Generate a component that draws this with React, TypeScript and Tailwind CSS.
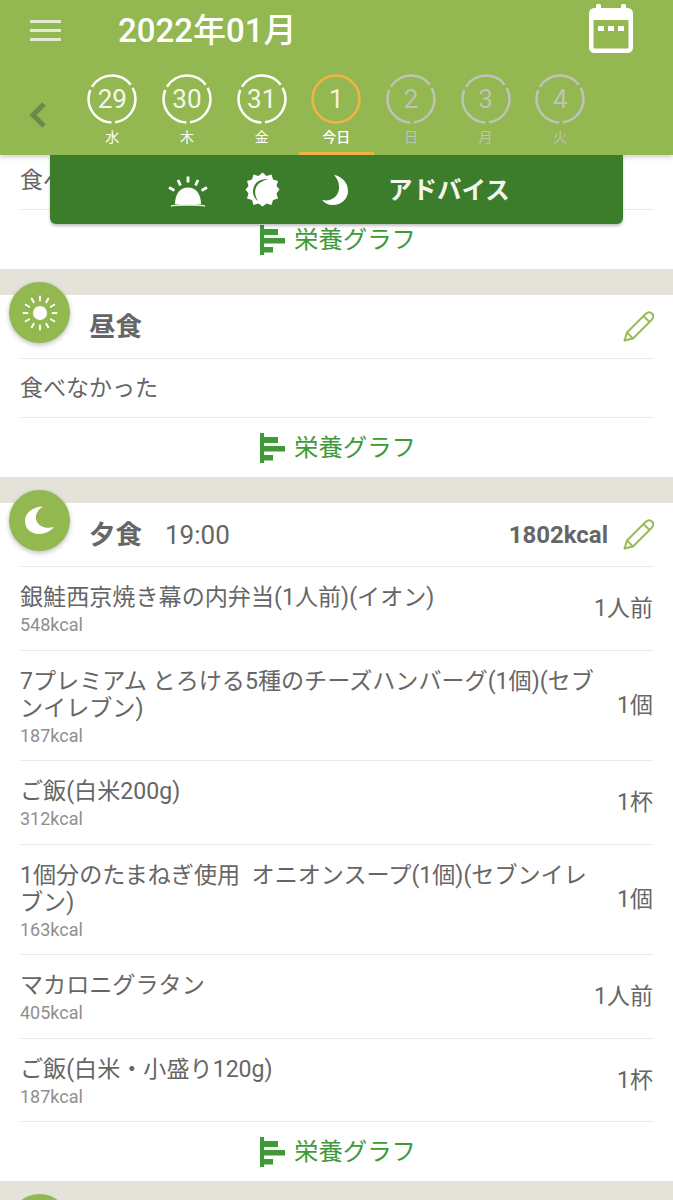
import React from 'react';

const FONT = 'font-["Roboto","Noto_Sans_CJK_JP",sans-serif]';

const days = [
  { num: '29', label: '水', state: 'past' },
  { num: '30', label: '木', state: 'past' },
  { num: '31', label: '金', state: 'past' },
  { num: '1', label: '今日', state: 'today' },
  { num: '2', label: '日', state: 'future' },
  { num: '3', label: '月', state: 'future' },
  { num: '4', label: '火', state: 'future' },
];

const foods = [
  { name: '銀鮭西京焼き幕の内弁当(1人前)(イオン)', kcal: '548kcal', amount: '1人前', rowClass: 'h-[83px]' },
  { name: '7プレミアム とろける5種のチーズハンバーグ(1個)(セブンイレブン)', kcal: '187kcal', amount: '1個', rowClass: 'h-[109px]' },
  { name: 'ご飯(白米200g)', kcal: '312kcal', amount: '1杯', rowClass: 'h-[83px]' },
  { name: '1個分のたまねぎ使用\u00a0 オニオンスープ(1個)(セブンイレブン)', kcal: '163kcal', amount: '1個', rowClass: 'h-[109px]' },
  { name: 'マカロニグラタン', kcal: '405kcal', amount: '1人前', rowClass: 'h-[83px]' },
  { name: 'ご飯(白米・小盛り120g)', kcal: '187kcal', amount: '1杯', rowClass: 'h-[82px]' },
];

const DayRing = ({ num, label, state }: { num: string; label: string; state: string }) => {
  const today = state === 'today';
  const future = state === 'future';
  return (
    <div className={`relative flex h-[83px] w-[74.67px] flex-col items-center pt-[2px] ${today ? 'border-b-[3px] border-[#f2b441]' : ''}`}>
      <div className="relative flex h-[50px] w-[50px] items-center justify-center">
        <svg width="50" height="50" viewBox="0 0 50 50" className="absolute inset-0">
          {today ? (
            <circle cx="25" cy="25" r="23.5" fill="none" stroke="#f2b441" strokeWidth="2.5" />
          ) : (
            <circle
              cx="25"
              cy="25"
              r="23.5"
              fill="none"
              stroke={future ? '#bfc4b8' : '#ffffff'}
              strokeWidth="2.5"
              pathLength={120}
              strokeDasharray="37 3"
              transform="rotate(91.5 25 25)"
            />
          )}
        </svg>
        <span className={`text-[26px] leading-none ${today ? 'text-[#f7f3df]' : future ? 'text-[#bfc4b8]' : 'text-[#f4f7ee]'}`}>{num}</span>
      </div>
      <span className={`mt-[3px] text-[14px] leading-[20px] ${future ? 'text-[#bfc4b8]' : 'text-white'} ${today ? 'font-medium' : ''}`}>{label}</span>
    </div>
  );
};

const SunBadgeIcon = () => (
  <svg width="36" height="36" viewBox="0 0 36 36" stroke="white" strokeWidth="2" strokeLinecap="round">
    <circle cx="18" cy="18" r="7" fill="white" stroke="none" />
    <path d="M18 1.500V5.500M18 30.500V34.500M1.500 18H5.500M30.500 18H34.500M9.750 3.700L11.750 7.200M24.250 28.800L26.250 32.300M3.700 9.750L7.200 11.750M28.800 24.250L32.300 26.250M3.700 26.250L7.200 24.250M28.800 11.750L32.300 9.750M9.750 32.300L11.750 28.800M24.250 7.200L26.250 3.700" />
  </svg>
);

const MoonBadgeIcon = () => (
  <svg width="36" height="36" viewBox="0 0 36 36">
    <path d="M21 3.500C10 4 3 10 3 18C3 26 9.500 31 17 31C23 31 29 28 32 24C25 26 18 24 15 19C12 14 15 7 21 3.500Z" fill="white" />
  </svg>
);

const PencilIcon = () => (
  <svg width="31" height="31" viewBox="0 0 31 31" fill="none" stroke="#9cb95a" strokeWidth="2" strokeLinejoin="round">
    <path d="M1.500 29.500L4 21.500L22.500 3C25 0.700 27.500 1 29 2.500C30.500 4 30.800 6.500 28.500 9L10 27.500Z" />
    <path d="M20.500 5L26.500 11M4 21.500L10 27.500" />
  </svg>
);

const GraphIcon = () => (
  <svg width="26" height="30" viewBox="0 0 26 30" fill="#3f9a35">
    <rect x="0" y="0" width="4" height="30" />
    <rect x="4" y="4" width="14" height="6" />
    <rect x="4" y="13" width="21" height="5.500" />
    <rect x="4" y="22" width="9" height="5.500" />
  </svg>
);

const GraphRow = () => (
  <div className="flex h-[59px] items-center justify-center gap-[8px] pl-[3px]">
    <GraphIcon />
    <span className="pt-[2px] text-[24.4px] leading-none text-[#3f9a35]">栄養グラフ</span>
  </div>
);

const Divider = () => <div className="mx-5 h-px bg-[#e8e8e8]" />;

const MealHead = ({ icon, title, time, kcal }: { icon: React.ReactNode; title: string; time?: string; kcal?: string }) => (
  <>
    <div className="absolute left-[9px] top-[-13px] flex h-[61px] w-[61px] items-center justify-center rounded-full bg-[#93b84f] shadow-[0_2px_5px_rgba(0,0,0,0.25)]">
      {icon}
    </div>
    <div className="flex h-[63px] items-center pl-[89px] pr-[19px] text-[#666666]">
      <span className="pt-[1px] text-[26.5px] font-bold leading-none">{title}</span>
      {time && <span className="ml-[23px] text-[26px] leading-none">{time}</span>}
      <div className="ml-auto flex items-center gap-[15px]">
        {kcal && <span className="text-[24px] font-bold leading-none">{kcal}</span>}
        <PencilIcon />
      </div>
    </div>
    <Divider />
  </>
);

const FoodRow = ({ name, kcal, amount, rowClass }: { name: string; kcal: string; amount: string; rowClass: string }) => (
  <div className={`flex items-center overflow-hidden px-5 ${rowClass}`}>
    <div className="h-full w-[580px] pt-[17px]">
      <p className="text-[23.1px] leading-[27px] text-[#666666]">{name}</p>
      <p className="pt-[1px] text-[18px] leading-[26px] text-[#8f8f8f]">{kcal}</p>
    </div>
    <span className="ml-auto whitespace-nowrap pt-[2px] text-[23px] text-[#666666]">{amount}</span>
  </div>
);

export default function App() {
  return (
    <div className={`${FONT} h-[1200px] w-[673px] overflow-hidden bg-[#e4e2d9]`}>
      <header className="relative z-20 h-[155px] bg-[#93b751] shadow-[0_2px_5px_rgba(0,0,0,0.2)]">
        <div className="flex h-[60px] items-center pl-[30px] pr-[40px]">
          <div className="flex w-[31px] flex-col gap-[6px]">
            <span className="h-[3px] bg-[#e3ecd2]" />
            <span className="h-[3px] bg-[#e3ecd2]" />
            <span className="h-[3px] bg-[#e3ecd2]" />
          </div>
          <h1 className="ml-[57px] text-[33px] font-medium leading-none text-white">2022年01月</h1>
          <svg width="44" height="50" viewBox="0 0 44 50" fill="none" className="ml-auto mt-[-2px]">
            <rect x="7" y="0" width="5" height="8" rx="1.500" fill="white" />
            <rect x="32" y="0" width="5" height="8" rx="1.500" fill="white" />
            <rect x="2.250" y="6.250" width="39.500" height="40.500" rx="3" stroke="white" strokeWidth="4.500" />
            <rect x="1" y="5" width="42" height="11" rx="3" fill="white" />
            <rect x="9" y="22" width="6" height="5" fill="white" />
            <rect x="19" y="22" width="6" height="5" fill="white" />
            <rect x="29" y="22" width="6" height="5" fill="white" />
          </svg>
        </div>
        <div className="flex items-start pl-[75px] pt-[12px]">
          {days.map((d) => (
            <DayRing key={d.num} {...d} />
          ))}
        </div>
        <svg width="20" height="28" viewBox="0 0 20 28" fill="none" className="absolute left-[28px] top-[101px]">
          <path d="M16 3L5 14L16 25" stroke="#6b8a4a" strokeWidth="5" />
        </svg>

        <div className="absolute left-[50px] top-full flex h-[69px] w-[573px] items-center rounded-b-[6px] bg-[#3c7d2c] pl-[117px] shadow-[0_2px_3px_rgba(0,0,0,0.25)]">
          <svg width="42" height="34" viewBox="0 0 42 34" fill="white">
            <path d="M8 31C8 21 13 14.500 21 14.500C29 14.500 34 21 34 31Z" />
            <path d="M4 33C12 30.500 30 30.500 38 33C30 32 12 32 4 33Z" stroke="white" strokeWidth="0.8" />
            <path d="M21 3.500V9.500M11 7L13.500 12.500M31 7L28.500 12.500M2 14.500L7.500 17.500M40 14.500L34.500 17.500" stroke="white" strokeWidth="2.800" />
          </svg>
          <svg width="35" height="35" viewBox="0 0 35 35" className="ml-[36px]">
            <path
              d="M17.500 0.500L21.500 4L26.500 2.500L28 7.500L33 9L31.500 14L34.500 17.500L31.500 21.500L33 26.500L28 28L26.500 33L21.500 31.500L17.500 34.500L13.500 31.500L8.500 33L7 28L2 26.500L3.500 21.500L0.500 17.500L3.500 14L2 9L7 7.500L8.500 2.500L13.500 4Z"
              fill="white"
            />
            <path d="M23 7.500C15 5.500 7.500 12 8 20C8.500 24 10 27 13 29C10.500 25 9.500 21 10.500 17C12 12 16.500 8.500 23 7.500Z" fill="#3c7d2c" />
          </svg>
          <svg width="30" height="32" viewBox="0 0 30 32" className="ml-[41px]">
            <path d="M13 1C20 2 27 8 27 17C27 25 20 31 12 31C7 31 3.500 29 1 26C10 28 17 23 18 15C18.500 9.500 16.500 4.500 13 1Z" fill="white" />
          </svg>
          <span className="ml-[37px] pt-[3px] text-[24.500px] font-bold leading-none text-[#f3f6ef]">アドバイス</span>
        </div>
      </header>

      <section className="relative bg-white">
        <div className="flex h-[54px] items-center pb-[2px] pl-5 text-[23px] text-[#666666]">食べなかった</div>
        <Divider />
        <GraphRow />
      </section>

      <section className="relative mt-[26px] bg-white">
        <MealHead icon={<SunBadgeIcon />} title="昼食" />
        <div className="flex h-[58px] items-center pl-5 pt-[2px] text-[23px] text-[#666666]">食べなかった</div>
        <Divider />
        <GraphRow />
      </section>

      <section className="relative mt-[26px] bg-white">
        <MealHead icon={<MoonBadgeIcon />} title="夕食" time="19:00" kcal="1802kcal" />
        {foods.map((f) => (
          <div key={f.name + f.kcal}>
            <FoodRow {...f} />
            <Divider />
          </div>
        ))}
        <GraphRow />
      </section>

      <section className="relative mt-[26px] h-[60px] bg-white">
        <div className="absolute left-[9px] top-[-13px] h-[61px] w-[61px] rounded-full bg-[#93b84f]" />
      </section>
    </div>
  );
}
